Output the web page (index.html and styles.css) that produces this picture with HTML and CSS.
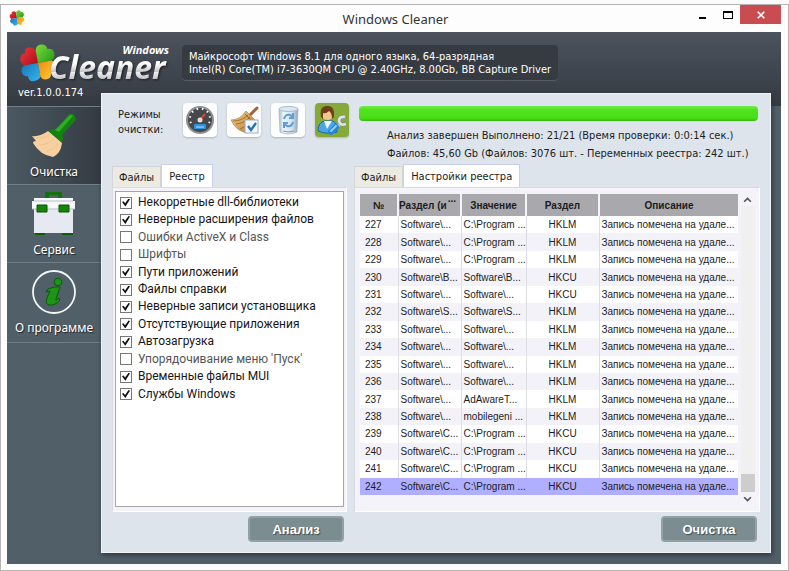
FILE: index.html
```html
<!DOCTYPE html>
<html lang="ru">
<head>
<meta charset="utf-8">
<title>Windows Cleaner</title>
<link rel="stylesheet" href="styles.css">
</head>
<body>
<svg class="defs" aria-hidden="true">
  <defs>
    <linearGradient id="lr" x1="0" y1="0" x2="1" y2="1"><stop offset="0" stop-color="#ee3a40"/><stop offset="1" stop-color="#b00d18"/></linearGradient>
    <linearGradient id="lg" x1="0" y1="0" x2="1" y2="1"><stop offset="0" stop-color="#7edb3c"/><stop offset="1" stop-color="#249a16"/></linearGradient>
    <linearGradient id="lb" x1="0" y1="0" x2="1" y2="1"><stop offset="0" stop-color="#1777bb"/><stop offset="1" stop-color="#36b4ee"/></linearGradient>
    <linearGradient id="ly" x1="0" y1="0" x2="1" y2="1"><stop offset="0" stop-color="#f08a0c"/><stop offset="1" stop-color="#ffd43c"/></linearGradient>
    <linearGradient id="straw" x1="0" y1="0" x2="1" y2="1"><stop offset="0" stop-color="#f0cf90"/><stop offset="1" stop-color="#b67b2c"/></linearGradient>
    <linearGradient id="glass" x1="0" y1="0" x2="1" y2="0"><stop offset="0" stop-color="#a9bccb"/><stop offset=".25" stop-color="#f1f7fb"/><stop offset=".7" stop-color="#cfe0ec"/><stop offset="1" stop-color="#8ea4b6"/></linearGradient>
    <symbol id="clover" viewBox="0 0 36 38">
      <g transform="rotate(-6 18 19)">
        <path fill="url(#lr)" d="M18 19L4 20Q0 17 1 12Q2 8 6 8Q6 3 10 2.500Q14 2 17 6Z"/>
        <path fill="url(#lg)" d="M18 19L17 6Q18 1 23 1Q28 1 29 6Q34 6 35 10Q36 15 32 18Z"/>
        <path fill="url(#lb)" d="M18 19L19 33Q16 37 11 36.500Q7 36 6.500 31Q2 31 1 27Q0 22 4 20Z"/>
        <path fill="url(#ly)" d="M18 19L32 18Q36 21 35 26Q34 30 30 30Q30 35 26 36Q21 37 19 33Z"/>
      </g>
    </symbol>
  </defs>
</svg>
<div class="window">
  <header class="titlebar">
    <svg class="app-icon"><use href="#clover"/></svg>
    <h1 class="title">Windows Cleaner</h1>
    <div class="controls">
      <button class="ctl" aria-label="Свернуть"><svg viewBox="0 0 10 10"><path d="M1 7h7v2H1z"/></svg></button>
      <button class="ctl" aria-label="Развернуть"><svg viewBox="0 0 10 10"><path fill-rule="evenodd" d="M0 1h10v8H0zM1 3v5h8V3z"/></svg></button>
      <button class="ctl close" aria-label="Закрыть"><svg viewBox="0 0 10 10"><path d="M1.700 1.700L8.300 8.300M8.300 1.700L1.700 8.300" stroke="#fff" stroke-width="1.600"/></svg></button>
    </div>
  </header>
  <div class="app">
    <div class="banner">
      <div class="logo">
        <svg class="logo-mark"><use href="#clover"/></svg>
        <div class="logo-words"><span class="logo-top">Windows</span><span class="logo-main">Cleaner</span></div>
      </div>
      <div class="sysinfo">Майкрософт Windows 8.1 для одного языка, 64-разрядная<br>Intel(R) Core(TM) i7-3630QM CPU @ 2.40GHz, 8.00Gb, BB Capture Driver</div>
    </div>
    <div class="body">
      <aside class="sidebar">
        <div class="version">ver.1.0.0.174</div>
        <nav>
          <a class="nav active" href="#clean">
            <svg viewBox="0 0 46 46"><path fill="#14820f" d="M37 2Q40-1 43 2T44 8L31 22Q34 26 30 29L18 19Q20 14 25 17Z"/><path fill="#32ac25" d="M38 3Q40 1 42 3L28 19L24 17Z"/><path fill="#f7d0a0" d="M17 18L31 30Q30 40 22 44Q9 42 2 30Q2 28 5 28L1 23Q9 24 17 18Z"/><path d="M6 25Q13 26 18 22M8 32Q17 32 22 26M16 38Q24 36 27 30" stroke="#eec592" fill="none"/></svg>
            <span>Очистка</span>
          </a>
          <a class="nav" href="#service">
            <svg viewBox="0 0 46 46"><path fill="#156f0a" fill-rule="evenodd" d="M14 1H31V8H14zM18 4V7H27V4z"/><path fill="#0c5d08" d="M4 40H14V44H4zM31 40H42V44H31z"/><path fill="#e6e9f1" d="M3 16H42V42H3z"/><path fill="#f8f9fd" d="M3 7H42V10H44V18H1V10H3z"/><path d="M1 18H44M3 10H42" stroke="#b7bdc9"/><path fill="#16860b" stroke="#0b5307" d="M6 14H16V21H6zM28 14H38V21H28z"/></svg>
            <span>Сервис</span>
          </a>
          <a class="nav" href="#about">
            <svg viewBox="0 0 46 46"><circle cx="23" cy="23" r="21" fill="none" stroke="#f3f6f7" stroke-width="1.800"/><g fill="#1c9415" stroke="#075e06"><circle cx="27" cy="13" r="3.800"/><path d="M17 20Q23 17 29 18L25 30Q24 33 28 29L29 31Q24 37 18 36Q14 35 16 29L19 22L15 23Z"/></g></svg>
            <span>О программе</span>
          </a>
        </nav>
      </aside>
      <main class="panel">
        <section class="top">
          <div class="modes-label">Режимы<br>очистки:</div>
          <div class="modes">
            <button class="mode" aria-label="Быстрая"><svg viewBox="0 0 34 34"><circle cx="17" cy="17" r="14" fill="#8c9094"/><circle cx="17" cy="17" r="12" fill="#45494c"/><path d="M8 20a10 10 0 1 1 18 0" fill="none" stroke="#fff" stroke-width="2" stroke-dasharray="1.500 4"/><path d="M16 18L22 11" stroke="#e5452c" stroke-width="2"/><circle cx="17" cy="17" r="2.500" fill="#f4ddd5"/><rect x="11" y="21" width="12" height="5" rx="1" fill="#2f92de"/><path d="M13 24h8" stroke="#b9e0ff"/></svg></button>
            <button class="mode" aria-label="Выборочная"><svg viewBox="0 0 34 34"><path d="M23 12L30 5" stroke="#a55e3c" stroke-width="3" stroke-linecap="round"/><path fill="url(#straw)" stroke="#a87835" stroke-width=".6" d="M19 8L28 17Q26 27 20 30Q9 28 4 17Q13 17 19 8Z"/><path d="M18 11L26 19M6 18Q15 18 21 12M9 21Q18 20 23 14M13 26Q20 24 25 17" stroke="#946022" stroke-width=".8" fill="none"/><rect x="18" y="17" width="13" height="13" fill="#f5f9ff" stroke="#9caec4"/><path d="M21 23L24 27L29 20" stroke="#226fc0" stroke-width="2.400" fill="none"/></svg></button>
            <button class="mode" aria-label="Корзина"><svg viewBox="0 0 34 34"><path fill="url(#glass)" stroke="#9db0c0" stroke-width=".7" d="M8 6L9 29Q17 33 26 29L27 6Z"/><ellipse cx="17.500" cy="6" rx="9.500" ry="2.500" fill="#dce9f1" stroke="#a9bccb"/><path d="M13 16Q14 11 19 12L22 14M22 10V15H18M22 19Q21 24 16 23L13 21M13 25V20H17" fill="none" stroke="#5c9fd8" stroke-width="2"/><path d="M12 28Q17 30 23 28" stroke="#8295a5" fill="none"/></svg></button>
            <button class="mode selected" aria-label="Экспертная"><svg viewBox="0 0 34 34"><path fill="#4ba4e5" stroke="#1764a9" d="M3 28Q3 19 10 18L18 18Q22 20 22 29Q12 32 3 28Z"/><path fill="#e8f5ff" d="M9 18L12 26L17 18Z"/><circle cx="12.500" cy="11" r="6" fill="#f5c48c"/><path fill="#70401a" d="M6 14Q4 3 12 3Q20 2 19 14L17 16Q17 10 14 8Q11 11 8 10L8 16Z"/><path d="M21 25L26 20" stroke="#d9e0e3" stroke-width="3"/><path d="M30 14Q24 13 24 18Q25 23 31 21" fill="none" stroke="#7c8b8d" stroke-width="4"/><path d="M30 14Q24 13 24 18Q25 23 31 21" fill="none" stroke="#dde4e6" stroke-width="2.800"/><path d="M16 29L21 24" stroke="#2685d9" stroke-width="6" stroke-linecap="round"/><path d="M16 28L21 23" stroke="#8ccdfa" stroke-width="2" stroke-linecap="round"/></svg></button>
          </div>
          <div class="status">
            <div class="progress" role="progressbar" aria-valuenow="100" aria-label="Анализ"></div>
            <p>Анализ завершен Выполнено: 21/21 (Время проверки: 0:0:14 сек.)<br>Файлов: 45,60 Gb (Файлов: 3076 шт. - Переменных реестра: 242 шт.)</p>
          </div>
        </section>
        <div class="columns">
          <section class="left">
            <div class="tabs"><button class="tab">Файлы</button><button class="tab current">Реестр</button></div>
            <div class="pane list-pane">
              <div class="list"><ul>
                <li><label><input type="checkbox" checked>Некорретные dll-библиотеки</label></li>
                <li><label><input type="checkbox" checked>Неверные расширения файлов</label></li>
                <li><label><input type="checkbox">Ошибки ActiveX и Class</label></li>
                <li><label><input type="checkbox">Шрифты</label></li>
                <li><label><input type="checkbox" checked>Пути приложений</label></li>
                <li><label><input type="checkbox" checked>Файлы справки</label></li>
                <li><label><input type="checkbox" checked>Неверные записи установщика</label></li>
                <li><label><input type="checkbox" checked>Отсутствующие приложения</label></li>
                <li><label><input type="checkbox" checked>Автозагрузка</label></li>
                <li><label><input type="checkbox">Упорядочивание меню 'Пуск'</label></li>
                <li><label><input type="checkbox" checked>Временные файлы MUI</label></li>
                <li><label><input type="checkbox" checked>Службы Windows</label></li>
              </ul></div>
            </div>
            <button class="action">Анализ</button>
          </section>
          <section class="right">
            <div class="tabs"><button class="tab">Файлы</button><button class="tab current">Настройки реестра</button></div>
            <div class="pane table-pane">
              <div class="table-box">
              <table>
                <colgroup><col class="c1"><col class="c2"><col class="c3"><col class="c4"><col></colgroup>
                <thead><tr><th>№</th><th class="cut">Раздел (и<span>...</span></th><th>Значение</th><th>Раздел</th><th>Описание</th></tr></thead>
                <tbody>
                  <tr><td>227</td><td>Software\...</td><td>C:\Program ...</td><td>HKLM</td><td>Запись помечена на удале...</td></tr>
                  <tr><td>228</td><td>Software\...</td><td>C:\Program ...</td><td>HKLM</td><td>Запись помечена на удале...</td></tr>
                  <tr><td>229</td><td>Software\...</td><td>C:\Program ...</td><td>HKLM</td><td>Запись помечена на удале...</td></tr>
                  <tr><td>230</td><td>Software\B...</td><td>Software\B...</td><td>HKCU</td><td>Запись помечена на удале...</td></tr>
                  <tr><td>231</td><td>Software\...</td><td>Software\...</td><td>HKCU</td><td>Запись помечена на удале...</td></tr>
                  <tr><td>232</td><td>Software\S...</td><td>Software\S...</td><td>HKLM</td><td>Запись помечена на удале...</td></tr>
                  <tr><td>233</td><td>Software\...</td><td>Software\...</td><td>HKLM</td><td>Запись помечена на удале...</td></tr>
                  <tr><td>234</td><td>Software\...</td><td>Software\...</td><td>HKLM</td><td>Запись помечена на удале...</td></tr>
                  <tr><td>235</td><td>Software\...</td><td>Software\...</td><td>HKLM</td><td>Запись помечена на удале...</td></tr>
                  <tr><td>236</td><td>Software\...</td><td>Software\...</td><td>HKLM</td><td>Запись помечена на удале...</td></tr>
                  <tr><td>237</td><td>Software\...</td><td>AdAwareT...</td><td>HKLM</td><td>Запись помечена на удале...</td></tr>
                  <tr><td>238</td><td>Software\...</td><td>mobilegeni ...</td><td>HKLM</td><td>Запись помечена на удале...</td></tr>
                  <tr><td>239</td><td>Software\C...</td><td>C:\Program ...</td><td>HKCU</td><td>Запись помечена на удале...</td></tr>
                  <tr><td>240</td><td>Software\C...</td><td>C:\Program ...</td><td>HKCU</td><td>Запись помечена на удале...</td></tr>
                  <tr><td>241</td><td>Software\C...</td><td>C:\Program ...</td><td>HKCU</td><td>Запись помечена на удале...</td></tr>
                  <tr class="picked"><td>242</td><td>Software\C...</td><td>C:\Program ...</td><td>HKCU</td><td>Запись помечена на удале...</td></tr>
                </tbody>
              </table>
              </div>
              <div class="scroll" aria-hidden="true">
                <svg viewBox="0 0 8 6"><path d="M1 5L4 2L7 5"/></svg>
                <div class="track"><div class="thumb"></div></div>
                <svg viewBox="0 0 8 6"><path d="M1 1L4 4L7 1"/></svg>
              </div>
            </div>
            <button class="action">Очистка</button>
          </section>
        </div>
      </main>
    </div>
  </div>
</div>
</body>
</html>
```
FILE: styles.css
```css
* { box-sizing: border-box; }
body {
  margin: 0;
  padding-top: 4px;
  min-height: 100vh;
  display: flex;
  background: #fafafa;
  font-family: "DejaVu Sans Condensed", "Noto Sans", sans-serif;
  font-size: 11px;
  color: #1c1c1c;
}
button { font: inherit; color: inherit; border: 0; padding: 0; margin: 0; }
.defs { position: absolute; width: 0; height: 0; }
.window {
  flex: 1;
  display: flex;
  flex-direction: column;
  min-width: 0;
  padding: 0 7px 6px 6px;
  border: 1px solid #b4b4b4;
  background: #fdfdfd;
}

/* title bar */
.titlebar { display: flex; height: 27px; align-items: center; }
.app-icon { width: 16px; height: 16px; margin: 0 0 2px 2px; }
.title { flex: 1; margin: 0 0 0 76px; text-align: center; font-family: "Noto Sans", sans-serif; font-size: 13px; font-weight: 400; line-height: 20px; color: #333; }
.controls { display: flex; align-self: flex-start; }
.ctl { width: 25px; height: 19px; background: none; display: flex; align-items: center; justify-content: center; }
.ctl svg { width: 10px; height: 10px; }
.close { width: 41px; background: #c84c50; }

/* dark frame */
.app {
  flex: 1;
  display: flex;
  flex-direction: column;
  background: linear-gradient(#4c535d, #353a42) top / 100% 74px no-repeat #515f69;
}
.banner { display: flex; height: 61px; color: #fff; }
.logo { width: 175px; padding: 12px 0 0 13px; display: flex; font-family: "Noto Sans", sans-serif; }
.logo-mark { width: 36px; height: 38px; flex: none; }
.logo-words { display: flex; flex-direction: column; margin-left: -7px; width: 120px; font-style: italic; font-weight: 700; }
.logo-top { font-size: 11px; line-height: 12px; text-align: right; }
.logo-main {
  font-size: 32px;
  line-height: 28px;
  padding-bottom: 8px;
  margin-top: -3px;
  background: linear-gradient(#fff 30%, #c4c6c9 52%, #eee 54%, #b9bcc0 76%);
  -webkit-background-clip: text;
  background-clip: text;
  color: transparent;
  filter: drop-shadow(1px 1px 1px #1d2025);
}
.sysinfo {
  align-self: flex-start;
  margin-top: 13px;
  padding: 5px 7px 4px;
  border-radius: 4px;
  background: #363b42;
  border-bottom: 1px solid #565d66;
  line-height: 13px;
  white-space: nowrap;
}
.body { flex: 1; display: flex; padding: 0 10px 11px 0; }

/* sidebar */
.sidebar { width: 94px; flex: none; color: #fff; }
.version { height: 20px; margin-top: -7px; padding-left: 11px; line-height: 14px; }
.nav {
  display: flex;
  flex-direction: column;
  align-items: center;
  height: 78px;
  padding-top: 6px;
  border-top: 1px solid #717f89;
  color: #fff;
  text-decoration: none;
  font-family: "Noto Sans", sans-serif;
  font-size: 12px;
  line-height: 18px;
  text-shadow: 1px 1px 1px #222;
}
.nav:last-child { border-bottom: 1px solid #717f89; height: 81px; }
.nav svg { width: 46px; height: 46px; margin-bottom: 4px; }
.nav.active { background: linear-gradient(90deg, #4c5962, #343b43); }

/* main panel */
.panel {
  flex: 1;
  min-width: 0;
  display: flex;
  flex-direction: column;
  padding: 9px 10px 10px 10px;
  background: #dee4eb;
  border: 1px solid #f2f5f8;
  box-shadow: 1px 2px 5px #2b333a;
}
.top { display: flex; height: 61px; }
.modes-label { width: 65px; margin: 4px 0 0 6px; line-height: 15px; }
.modes { display: flex; gap: 10px; align-items: flex-start; }
.mode { width: 34px; height: 34px; border-radius: 4px; background: #fdfdfe; box-shadow: 0 1px 2px #aab2bb; }
.mode.selected { background: #86aa39; }
.mode svg { width: 34px; height: 34px; display: block; }
.status { flex: 1; margin: 3px 2px 0 10px; }
.progress { height: 15px; border-radius: 4px; background: linear-gradient(#74e957, #4fe41b 25%, #49df17 80%, #3aba10); }
.status p { margin: 6px 0 0 28px; line-height: 18px; white-space: nowrap; }
.columns { flex: 1; display: flex; gap: 7px; }
.left { width: 235px; flex: none; }
.right { flex: 1; min-width: 0; }
.left, .right { display: flex; flex-direction: column; }
.tabs { display: flex; align-items: flex-end; height: 23px; }
.tab { height: 21px; padding: 0 6px; border: 1px solid #d3d5da; border-bottom: 0; background: #ebebe4; white-space: nowrap; }
.tab.current { height: 23px; padding: 0 7px; background: #fff; border-color: #c9cfee; }
.pane { flex: 1; background: #f4f3f9; border: 1px solid #d8dae1; border-right-color: #fff; border-bottom-color: #fff; }
.list-pane { display: flex; padding: 3px 2px 4px; }
.list { flex: 1; background: #fff; border: 1px solid #a6a7ab; padding: 2px 0 0 4px; }
.list ul { height: 209px; margin: 0; padding: 0; list-style: none; display: grid; grid-auto-rows: 1fr; }
.list label { display: flex; align-items: center; gap: 6px; font-family: Roboto, "Noto Sans", sans-serif; font-size: 12px; line-height: 17px; white-space: nowrap; color: #555; }
.list label:has(:checked) { color: #161616; }
.list input {
  appearance: none;
  width: 12px;
  height: 12px;
  margin: 0;
  border: 1px solid #777;
  background: #fff;
  display: grid;
  place-items: center;
}
.list input:checked::before {
  content: "";
  width: 8px;
  height: 8px;
  background: #111;
  clip-path: polygon(0 45%, 18% 35%, 38% 60%, 82% 0, 100% 8%, 42% 100%);
}
.action {
  align-self: flex-end;
  width: 96px;
  height: 26px;
  margin: 4px 3px 0 0;
  border: 2px solid #93a2a6;
  border-radius: 4px;
  background: #7b8d91;
  color: #fff;
  font-family: "Liberation Sans", sans-serif;
  font-size: 13px;
  font-weight: 700;
  text-shadow: 1px 1px 1px #3d4a4e;
}

/* registry table */
.table-pane { display: flex; padding: 6px 3px 0 5px; }
.table-box { flex: 1; min-width: 0; padding-bottom: 16px; }
table {
  width: 100%;
  height: 301px;
  table-layout: fixed;
  border-collapse: collapse;
  font-family: "Liberation Sans", sans-serif;
  font-size: 10px;
}
.c1 { width: 38px; }
.c2 { width: 63px; }
.c3 { width: 65px; }
.c4 { width: 73px; }
th, td { padding: 0; white-space: nowrap; overflow: hidden; }
th { height: 22px; background: #a9a9ad; border-right: 2px solid #f4f3f9; }
td { padding-left: 2px; border-right: 1px solid #dcdce2; background: #fff; }
td:first-child { padding-left: 5px; }
td:nth-child(4) { padding: 0; text-align: center; }
th:last-child, td:last-child { border-right: 0; }
tr:nth-child(even) td { background: #f3f2f9; }
tr.picked td { background: #b0aeff; border-color: #b0aeff; }
.cut { text-align: left; }
.cut span { vertical-align: 7px; margin-left: 1px; line-height: 0; }
.scroll { width: 17px; margin-left: 1px; display: flex; flex-direction: column; align-items: center; padding: 2px 0 8px; }
.scroll svg { width: 9px; height: 7px; }
.scroll path { fill: none; stroke: #555; stroke-width: 1.5; }
.track { flex: 1; width: 14px; background: #f0f0f1; margin: 3px 0 4px; display: flex; align-items: flex-end; }
.thumb { width: 14px; height: 18px; background: #cdcdcd; }
```
